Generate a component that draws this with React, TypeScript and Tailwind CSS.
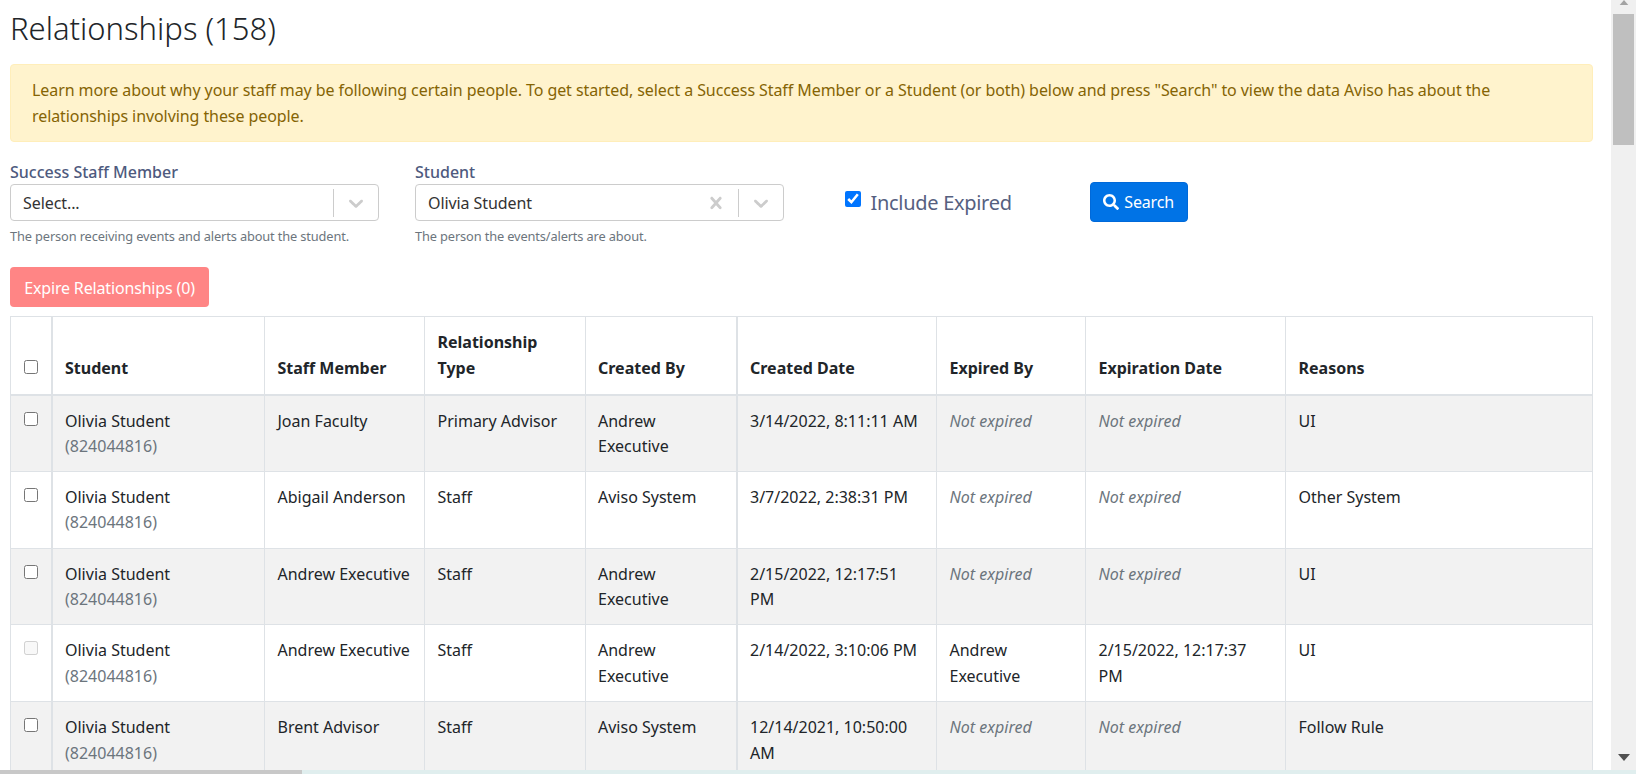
import { FaSearch } from 'react-icons/fa';

const font = "font-['Noto_Sans',sans-serif]";

type Row = {
  staff: string;
  type: string;
  createdBy: string;
  createdDate: string;
  expiredBy?: string;
  expirationDate?: string;
  reasons: string;
  disabled?: boolean;
};

const rows: Row[] = [
  { staff: 'Joan Faculty', type: 'Primary Advisor', createdBy: 'Andrew\nExecutive', createdDate: '3/14/2022, 8:11:11 AM', reasons: 'UI' },
  { staff: 'Abigail Anderson', type: 'Staff', createdBy: 'Aviso System', createdDate: '3/7/2022, 2:38:31 PM', reasons: 'Other System' },
  { staff: 'Andrew Executive', type: 'Staff', createdBy: 'Andrew\nExecutive', createdDate: '2/15/2022, 12:17:51\nPM', reasons: 'UI' },
  {
    staff: 'Andrew Executive',
    type: 'Staff',
    createdBy: 'Andrew\nExecutive',
    createdDate: '2/14/2022, 3:10:06 PM',
    expiredBy: 'Andrew\nExecutive',
    expirationDate: '2/15/2022, 12:17:37\nPM',
    reasons: 'UI',
    disabled: true,
  },
  { staff: 'Brent Advisor', type: 'Staff', createdBy: 'Aviso System', createdDate: '12/14/2021, 10:50:00\nAM', reasons: 'Follow Rule' },
];

function Chevron() {
  return (
    <svg viewBox="0 0 20 20" className="h-6 w-6 fill-[#cccccc]">
      <path d="M4.516 7.548c0.436-0.446 1.043-0.481 1.576 0l3.908 3.747 3.908-3.747c0.533-0.481 1.141-0.446 1.576 0 0.436 0.445 0.408 1.197 0 1.615-0.406 0.418-4.695 4.502-4.695 4.502-0.217 0.223-0.502 0.335-0.789 0.335s-0.572-0.112-0.789-0.335c0 0-4.287-4.084-4.695-4.502s-0.436-1.17 0-1.615z" />
    </svg>
  );
}

function Cross() {
  return (
    <svg viewBox="0 0 20 20" className="h-6 w-6 fill-[#cccccc]">
      <path d="M14.348 14.849c-0.469 0.469-1.229 0.469-1.697 0l-2.651-3.030-2.651 3.029c-0.469 0.469-1.229 0.469-1.697 0-0.469-0.469-0.469-1.229 0-1.697l2.758-3.15-2.759-3.152c-0.469-0.469-0.469-1.228 0-1.697s1.228-0.469 1.697 0l2.652 3.031 2.651-3.031c0.469-0.469 1.228-0.469 1.697 0s0.469 1.229 0 1.697l-2.758 3.152 2.758 3.15c0.469 0.469 0.469 1.229 0 1.698z" />
    </svg>
  );
}

function SelectField({ label, value, help, clearable }: { label: string; value: string; help: string; clearable?: boolean }) {
  return (
    <div className="w-[368.5px]">
      <div className="h-[25px] pt-[1px] text-[16px] leading-[25px] font-medium text-[#4e5a7e]">{label}</div>
      <div className="flex h-[37px] items-center rounded border border-[#cccccc] bg-white pl-[12px]">
        <span className="flex-1 pt-[2px] text-[16px] tracking-[-0.005em] text-[#333333]">{value}</span>
        {clearable && (
          <span className="mr-[10px] flex">
            <Cross />
          </span>
        )}
        <span className="h-[28px] w-px bg-[#cccccc]" />
        <span className="flex w-[44px] justify-center">
          <Chevron />
        </span>
      </div>
      <div className="mt-[6px] text-[12.8px] leading-[19px] tracking-[-0.01em] text-[#6c757d]">{help}</div>
    </div>
  );
}

function NotExpired() {
  return <span className="text-[#6c757d] italic">Not expired</span>;
}

const thClass = 'border border-[#dee2e6] border-b-2 py-[12px] pr-[12px] pl-[12.5px] align-bottom text-left font-bold';
const tdClass = 'border border-[#dee2e6] pt-[13px] pr-[12px] pb-[11px] pl-[12.5px] align-top whitespace-pre-line';

export default function App() {
  return (
    <div className={`flex h-[774px] w-[1636px] flex-col overflow-hidden bg-white ${font} text-[16px] leading-[25.6px] text-[#212529]`}>
      <div className="flex h-[770px]">
        <main className="w-[1611px] overflow-hidden pr-[18px] pl-[10px]">
          <h2 className="h-[64px] pt-[9px] text-[31px] leading-[38px] font-light">Relationships (158)</h2>

          <div className="h-[78px] rounded border border-[#ffeeba] bg-[#fff3cd] px-[21px] py-[13px] text-[16px] tracking-[-0.005em] text-[#856404]">
            Learn more about why your staff may be following certain people. To get started, select a Success Staff Member or a Student (or both) below and press "Search" to view the data Aviso has about the relationships involving these people.
          </div>

          <div className="mt-[17px] flex h-[108px] items-start">
            <SelectField label="Success Staff Member" value="Select..." help="The person receiving events and alerts about the student." />
            <div className="ml-[36.5px]">
              <SelectField label="Student" value="Olivia Student" help="The person the events/alerts are about." clearable />
            </div>
            <label className="mt-[31px] ml-[61px] flex h-[27px] items-start">
              <input type="checkbox" defaultChecked className="mt-[1px] h-[16px] w-[16px] accent-[#0075ff]" />
              <span className="mt-[1px] ml-[10px] text-[20px] leading-[24px] tracking-[-0.015em] text-[#56607f]">Include Expired</span>
            </label>
            <button className="mt-[23px] ml-[78px] flex h-[40px] w-[98px] items-center justify-center gap-[5px] rounded border border-[#0069d9] bg-[#0073e6] pt-[2px] text-[16px] tracking-[-0.01em] text-white">
              <FaSearch className="-mt-[2px] h-[16px] w-[16px]" />
              Search
            </button>
          </div>

          <button className="h-[40px] w-[199px] rounded bg-[#ff8585] pt-[3px] text-[16px] tracking-[-0.01em] text-white">Expire Relationships (0)</button>

          <table className="mt-[9px] w-[1582px] table-fixed border-collapse">
            <colgroup>
              <col className="w-[41px]" />
              <col className="w-[213px]" />
              <col className="w-[160px]" />
              <col className="w-[160.5px]" />
              <col className="w-[151.5px]" />
              <col className="w-[200px]" />
              <col className="w-[149px]" />
              <col className="w-[200px]" />
              <col className="w-[307px]" />
            </colgroup>
            <thead>
              <tr className="h-[78px]">
                <th className={`${thClass} border-r-2`}>
                  <input type="checkbox" className="mb-[8px] block h-[14px] w-[14px]" />
                </th>
                <th className={thClass}>Student</th>
                <th className={thClass}>Staff Member</th>
                <th className={thClass}>
                  Relationship
                  <br />
                  Type
                </th>
                <th className={`${thClass} border-r-2`}>Created By</th>
                <th className={thClass}>Created Date</th>
                <th className={thClass}>Expired By</th>
                <th className={thClass}>Expiration Date</th>
                <th className={thClass}>Reasons</th>
              </tr>
            </thead>
            <tbody>
              {rows.map((row, i) => (
                <tr key={i} className={`h-[76.75px] ${i % 2 === 0 ? 'bg-[#f2f2f2]' : 'bg-white'}`}>
                  <td className={`${tdClass} border-r-2`}>
                    <input type="checkbox" disabled={row.disabled} className="mt-[3px] block h-[14px] w-[14px]" />
                  </td>
                  <td className={tdClass}>
                    Olivia Student
                    <br />
                    <span className="text-[#6c757d]">(824044816)</span>
                  </td>
                  <td className={tdClass}>{row.staff}</td>
                  <td className={tdClass}>{row.type}</td>
                  <td className={`${tdClass} border-r-2`}>{row.createdBy}</td>
                  <td className={tdClass}>{row.createdDate}</td>
                  <td className={tdClass}>{row.expiredBy ?? <NotExpired />}</td>
                  <td className={tdClass}>{row.expirationDate ?? <NotExpired />}</td>
                  <td className={tdClass}>{row.reasons}</td>
                </tr>
              ))}
            </tbody>
          </table>
        </main>

        <div className="flex w-[25px] flex-col items-center bg-[#f0f0f0]">
          <svg viewBox="0 0 12 7" className="mt-0 h-[5px] w-[12px] fill-[#a3a3a3]">
            <path d="M6 0l6 7H0z" />
          </svg>
          <div className="mt-[9px] h-[131px] w-[21px] bg-[#bfbfbf]" />
          <svg viewBox="0 0 12 7" className="mt-[609px] h-[7px] w-[12px] fill-[#505050]">
            <path d="M0 0h12L6 7z" />
          </svg>
        </div>
      </div>

      <div className="flex h-[4px]">
        <div className="w-[302px] bg-[#c8c8c8]" />
        <div className="flex-1 bg-[#e0eeee]" />
      </div>
    </div>
  );
}
